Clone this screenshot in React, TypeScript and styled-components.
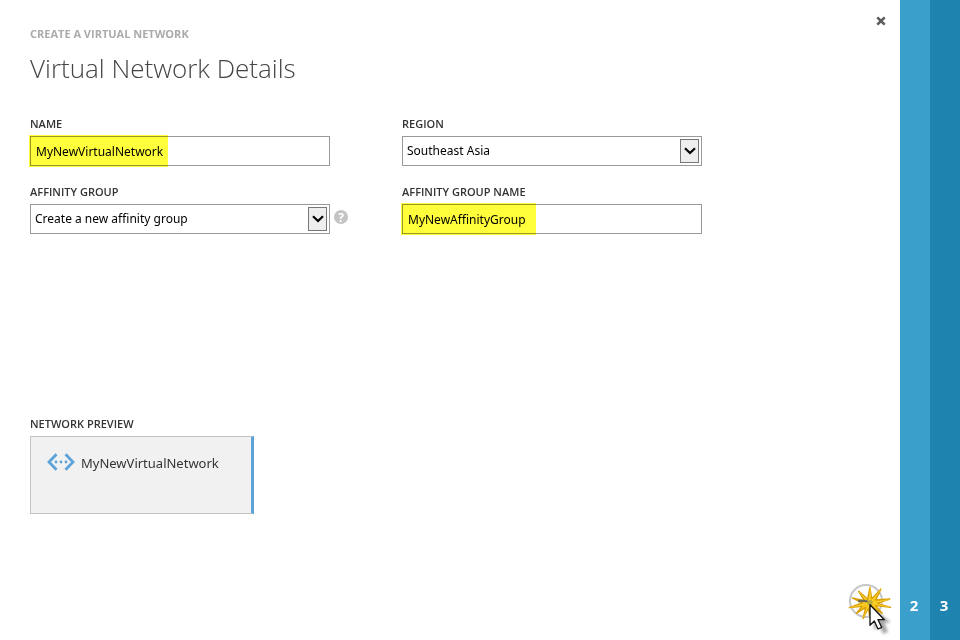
import React, { useState } from "react";
import styled, { createGlobalStyle } from "styled-components";

const GlobalStyle = createGlobalStyle`
  *, *::before, *::after { box-sizing: border-box; }
  body {
    margin: 0;
    background: #fff;
    color: #333;
    font-family: "Noto Sans", "Open Sans", sans-serif;
    font-size: 12px;
  }
`;

const Wizard = styled.div`
  display: flex;
  min-height: 100vh;
`;

const Page = styled.main`
  flex: 1;
  min-width: 0;
  display: flex;
  flex-direction: column;
  padding: 12px 10px 0 30px;
`;

const TopBar = styled.header`
  display: flex;
  justify-content: space-between;
  align-items: flex-start;
  height: 102px;
`;

const Crumb = styled.p`
  margin: 12px 0 0;
  font-family: "Open Sans", sans-serif;
  font-size: 11px;
  font-weight: 700;
  line-height: 20px;
  color: #aaa;
`;

const Title = styled.h1`
  margin: 4px 0 0;
  font-family: "Open Sans", sans-serif;
  font-size: 26px;
  font-weight: 300;
  line-height: 40px;
  color: #444;
`;

const CloseButton = styled.button`
  display: flex;
  padding: 4px;
  border: 0;
  background: none;
  cursor: pointer;
`;

const Form = styled.form`
  display: grid;
  grid-template-columns: minmax(0, 320px) minmax(0, 300px);
  column-gap: 52px;
  row-gap: 16px;
`;

const Field = styled.div`
  display: flex;
  flex-direction: column;
`;

const Label = styled.label`
  font-family: "Open Sans", sans-serif;
  font-size: 11px;
  font-weight: 600;
  line-height: 20px;
  height: 22px;
  color: #333;
`;

const ControlRow = styled.div`
  display: flex;
  align-items: center;
  gap: 4px;
`;

const Control = styled.div`
  position: relative;
  flex: 1;
  max-width: 300px;
`;

const Input = styled.input`
  display: block;
  width: 100%;
  height: 30px;
  padding: 0 5px;
  border: 1px solid #999;
  border-radius: 0;
  background: #fff;
  color: #000;
  font: 12px "Noto Sans", sans-serif;
`;

const Select = styled.select`
  display: block;
  width: 100%;
  height: 30px;
  padding: 0 26px 2px 4px;
  appearance: none;
  border: 1px solid #999;
  border-radius: 0;
  background: #fff;
  color: #000;
  font: 12px "Noto Sans", sans-serif;
`;

const Arrow = styled.span`
  position: absolute;
  top: 3px;
  right: 3px;
  display: flex;
  align-items: center;
  justify-content: center;
  width: 19px;
  height: 24px;
  border: 1px solid #777;
  background: #eee;
  pointer-events: none;
`;

const Highlight = styled.span<{ $width: number }>`
  position: absolute;
  top: -1px;
  left: -1px;
  width: ${(p) => p.$width}px;
  height: 32px;
  background: #ffff3c;
  mix-blend-mode: multiply;
  pointer-events: none;
`;

const HelpButton = styled.button`
  display: flex;
  align-items: center;
  justify-content: center;
  width: 14px;
  height: 14px;
  padding: 0;
  margin-bottom: 4px;
  border: 0;
  border-radius: 50%;
  background: #c4c4c4;
  color: #fff;
  font: 700 12px "Open Sans", sans-serif;
`;

const Preview = styled.section`
  margin-top: 180px;
`;

const PreviewTitle = styled.h2`
  margin: 0;
  font-family: "Open Sans", sans-serif;
  font-size: 11px;
  font-weight: 600;
  line-height: 20px;
  height: 22px;
  color: #333;
`;

const NetworkCard = styled.div`
  display: flex;
  align-items: flex-start;
  gap: 6px;
  width: 224px;
  height: 78px;
  padding: 16px;
  border: 1px solid #c3c3c3;
  border-right: 3px solid #5ba3d9;
  background: #f1f1f1;
  font-size: 13px;
  line-height: 20px;
`;

const Footer = styled.footer`
  display: flex;
  justify-content: flex-end;
  margin-top: auto;
`;

const NextButton = styled.button`
  display: flex;
  width: 50px;
  height: 60px;
  margin-right: -5px;
  padding: 0;
  border: 0;
  background: none;
`;

const Step = styled.button<{ $color: string }>`
  display: flex;
  align-items: flex-end;
  justify-content: center;
  width: 30px;
  padding: 0 2px 25px 0;
  border: 0;
  background: ${(p) => p.$color};
  color: #fff;
  font: 700 15px/20px "Open Sans", sans-serif;
`;

function DropArrow() {
  return (
    <Arrow>
      <svg width="12" height="8" viewBox="0 0 12 8" aria-hidden="true">
        <path d="M1 1.2 6 6 11 1.2" fill="none" stroke="#000" strokeWidth="2.2" />
      </svg>
    </Arrow>
  );
}

function NetworkIcon() {
  return (
    <svg width="28" height="18" viewBox="0 0 28 18" aria-hidden="true">
      <g fill="none" stroke="#5ba3d9" strokeWidth="2.8">
        <path d="M9.5 1.2 2 9l7.5 7.8M18.5 1.2 26 9l-7.5 7.8" />
      </g>
      <g fill="#5ba3d9">
        <circle cx="9" cy="9" r="1.4" />
        <circle cx="14" cy="9" r="1.4" />
        <circle cx="19" cy="9" r="1.4" />
      </g>
    </svg>
  );
}

function NextIcon() {
  return (
    <svg width="50" height="60" viewBox="0 0 150 180" aria-hidden="true">
      <defs>
        <filter id="soft" x="-30%" y="-30%" width="160%" height="160%">
          <feGaussianBlur stdDeviation="4" />
        </filter>
      </defs>
      <circle cx="63" cy="63" r="48" fill="#fff" stroke="#c6c6c6" strokeWidth="6" />
      <path
        d="M87 86 137 127l-19 2 11 26-14 7-13-25-15 14z"
        fill="#777"
        opacity=".65"
        filter="url(#soft)"
      />
      <path
        d="M41 34 68 57 75 22 80 56 108 27 92 60 134 57 97 70 137 82 92 77 112 100 82 82 73 105 71 83 54 116 62 82 34 100 51 79 13 83 51 69 22 54 58 62z"
        fill="#f8c51c"
        stroke="#d9a005"
        strokeWidth="4"
        strokeLinejoin="round"
      />
      <path d="M39 63h30" stroke="#6b6a55" strokeWidth="7" />
      <path
        d="M75 69 42 36M75 69 76 25M75 69 107 29M75 69 133 59M75 69 133 81M75 69 55 112M75 69 17 82"
        stroke="#ffd83c"
        strokeWidth="2"
      />
      <circle cx="75" cy="68" r="8" fill="#9a9a45" opacity=".7" />
      <path
        d="M75 74v62l13-13 11 24 11-5-11-23h19z"
        fill="#fff"
        stroke="#111"
        strokeWidth="4"
        strokeLinejoin="round"
      />
    </svg>
  );
}

export default function App() {
  const [name, setName] = useState("MyNewVirtualNetwork");
  const [group, setGroup] = useState("MyNewAffinityGroup");

  return (
    <>
      <GlobalStyle />
      <Wizard>
        <Page>
          <TopBar>
            <div>
              <Crumb>CREATE A VIRTUAL NETWORK</Crumb>
              <Title>Virtual Network Details</Title>
            </div>
            <CloseButton type="button" aria-label="Close">
              <svg width="10" height="10" viewBox="0 0 10 10" aria-hidden="true">
                <path d="M1.3 1.3 8.7 8.7M8.7 1.3 1.3 8.7" stroke="#5c5c5c" strokeWidth="2.6" />
              </svg>
            </CloseButton>
          </TopBar>
          <Form>
            <Field>
              <Label htmlFor="name">NAME</Label>
              <Control>
                <Input id="name" value={name} onChange={(e) => setName(e.target.value)} />
                <Highlight $width={139} />
              </Control>
            </Field>
            <Field>
              <Label htmlFor="region">REGION</Label>
              <Control>
                <Select id="region">
                  <option>Southeast Asia</option>
                </Select>
                <DropArrow />
              </Control>
            </Field>
            <Field>
              <Label htmlFor="affinity">AFFINITY GROUP</Label>
              <ControlRow>
                <Control>
                  <Select id="affinity">
                    <option>Create a new affinity group</option>
                  </Select>
                  <DropArrow />
                </Control>
                <HelpButton type="button" aria-label="Help with affinity groups">?</HelpButton>
              </ControlRow>
            </Field>
            <Field>
              <Label htmlFor="group">AFFINITY GROUP NAME</Label>
              <Control>
                <Input id="group" value={group} onChange={(e) => setGroup(e.target.value)} />
                <Highlight $width={135} />
              </Control>
            </Field>
          </Form>
          <Preview>
            <PreviewTitle>NETWORK PREVIEW</PreviewTitle>
            <NetworkCard>
              <NetworkIcon />
              <span>{name}</span>
            </NetworkCard>
          </Preview>
          <Footer>
            <NextButton type="button" aria-label="Next">
              <NextIcon />
            </NextButton>
          </Footer>
        </Page>
        <Step type="button" $color="#3a9fca">2</Step>
        <Step type="button" $color="#1f83b0">3</Step>
      </Wizard>
    </>
  );
}
